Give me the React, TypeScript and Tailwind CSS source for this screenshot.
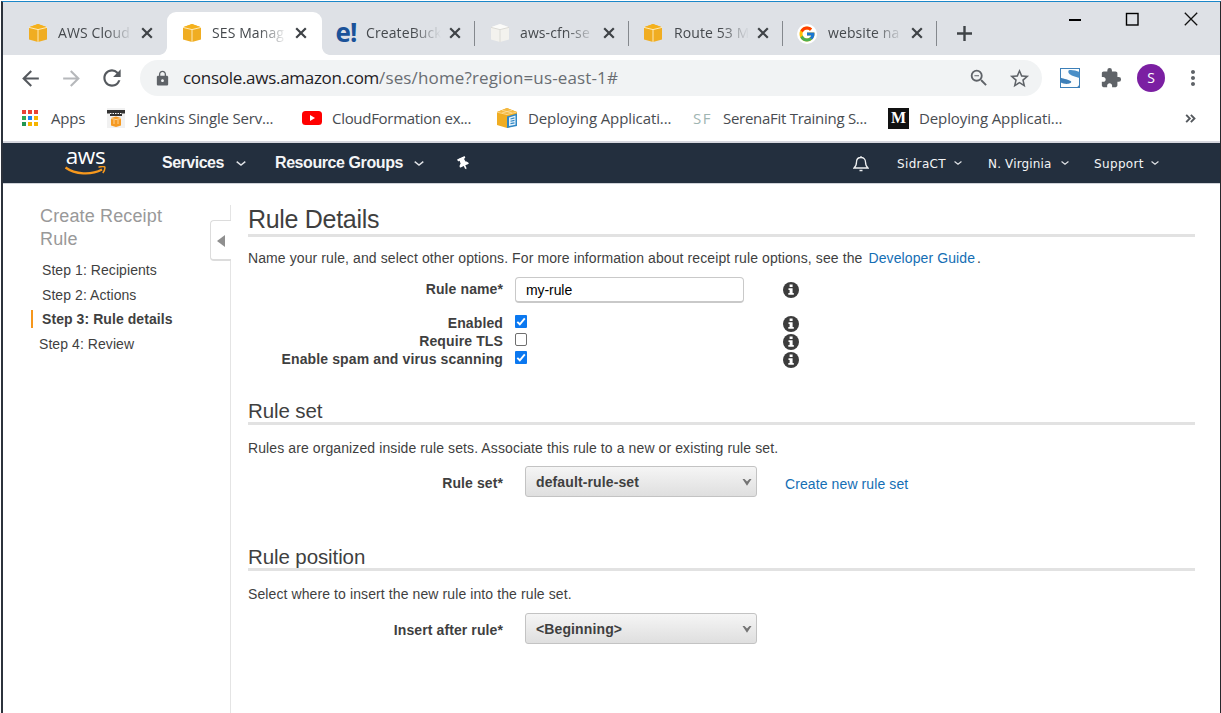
import type { ReactNode } from "react";
import { FcGoogle } from "react-icons/fc";
import {
  MdArrowBack,
  MdArrowForward,
  MdRefresh,
  MdLock,
  MdStarBorder,
  MdExtension,
  MdMoreVert,
  MdZoomOut,
} from "react-icons/md";
import { FaThumbtack } from "react-icons/fa";

function Cube({ face = "#f0ad22", top = "#f5b11c", line = "#fff1c9", className = "" }) {
  return (
    <svg viewBox="0 0 20 20" className={`size-5 shrink-0 ${className}`}>
      <path d="M1 4.2 10 1l9 3.2v12.4L10 19 1 16.6z" fill={face} />
      <path d="M1 4.2 10 1l9 3.2-9 2.2z" fill={top} />
      <path d="M1 4.4 10 6.6l9-2.2M10 6.6V19" fill="none" stroke={line} strokeWidth="0.9" />
    </svg>
  );
}

function CloseX() {
  return (
    <svg viewBox="0 0 12 12" className="size-3 shrink-0">
      <path d="M1.2 1.2 10.8 10.8M10.8 1.2 1.2 10.8" stroke="#3f4347" strokeWidth="2.2" fill="none" />
    </svg>
  );
}

function Tab({ icon, title, active = false, divider = false }: { icon: ReactNode; title: string; active?: boolean; divider?: boolean }) {
  return (
    <div className={`relative flex h-[43px] items-center pl-[14px] ${active ? "-mr-px w-[155px] rounded-t-[9px] bg-white" : "w-[154px]"}`}>
      <span className="flex w-[22px] justify-center">{icon}</span>
      <span className="-mt-px ml-[9px] w-[75px] overflow-hidden whitespace-nowrap text-[14px] leading-5 tracking-[0.1px] text-[#45494d] [mask-image:linear-gradient(to_right,#000_62%,transparent_100%)]">
        {title}
      </span>
      <span className="-mt-px ml-[8px] flex">
        <CloseX />
      </span>
      {divider && <span className="absolute right-0 top-[9px] h-[25px] w-px bg-[#84888d]" />}
      {active && (
        <>
          <span className="absolute -left-2 bottom-0 size-2 bg-[radial-gradient(circle_at_0_0,#dee1e6_7.5px,#fff_8.2px)]" />
          <span className="absolute -right-2 bottom-0 size-2 bg-[radial-gradient(circle_at_100%_0,#dee1e6_7.5px,#fff_8.2px)]" />
        </>
      )}
    </div>
  );
}

function TabStrip() {
  return (
    <div className="flex h-[53px] shrink-0 items-end bg-[#dee1e6] pl-[10px]">
      <Tab icon={<Cube className="-mt-px" />} title="AWS Cloud" />
      <Tab icon={<Cube className="-mt-px" />} title="SES Manag" active />
      <Tab
        icon={<span className="-mt-[3px] text-[26px] font-bold leading-5 tracking-[-1px] text-[#1b5299]">e!</span>}
        title="CreateBuck"
        divider
      />
      <Tab icon={<Cube face="#f3f2ee" top="#fbfbf9" line="#d9d8d2" className="-mt-px" />} title="aws-cfn-se" divider />
      <Tab icon={<Cube className="-ml-[2px] -mt-px" />} title="Route 53 M" divider />
      <Tab
        icon={
          <span className="-ml-[2px] flex size-5 shrink-0 items-center justify-center rounded-full bg-white">
            <FcGoogle size={18} />
          </span>
        }
        title="website na"
        divider
      />
      <div className="flex h-[43px] items-center pl-[20px]">
        <svg viewBox="0 0 15 15" className="size-[15px]">
          <path d="M7.5 0v15M0 7.5h15" stroke="#3f4347" strokeWidth="2.4" />
        </svg>
      </div>
      <div className="ml-auto mr-[22px] flex items-center gap-[44px] self-start pt-[10px]">
        <svg viewBox="0 0 14 14" className="size-[14px]">
          <path d="M1 8h12" stroke="#000" strokeWidth="2" />
        </svg>
        <svg viewBox="0 0 14 14" className="-ml-px mr-px size-[14px]">
          <rect x="1.5" y="1.5" width="11.5" height="11.5" fill="none" stroke="#000" strokeWidth="1.4" />
        </svg>
        <svg viewBox="0 0 14 14" className="size-[14px]">
          <path d="M.8.8 13.2 13.2M13.2.8.8 13.2" stroke="#111" strokeWidth="1.3" />
        </svg>
      </div>
    </div>
  );
}

function Toolbar() {
  return (
    <div className="flex h-[46px] shrink-0 items-center bg-white pl-[15px] text-[#5f6368]">
      <MdArrowBack size={25} className="text-[#55595e]" />
      <MdArrowForward size={25} className="ml-[16px] text-[#b6b8bb]" />
      <MdRefresh size={26} className="ml-[15px] text-[#55595e]" />
      <div className="ml-[15px] flex h-9 w-[902px] items-center rounded-full bg-[#f1f3f4] pl-[14px] pr-[11px]">
        <MdLock size={17} />
        <span className="ml-[12px] whitespace-nowrap text-[17px] leading-6 tracking-[-0.29px] text-[#1f2124]">console.aws.amazon.com</span>
        <span className="whitespace-nowrap text-[17px] leading-6 tracking-[0.14px] text-[#696d72]">/ses/home?region=us-east-1#</span>
        <MdZoomOut size={22} className="ml-auto" />
        <MdStarBorder size={23} className="ml-[18px]" />
      </div>
      <svg viewBox="0 0 20 20" className="ml-[18px] size-5">
        <rect x="0.5" y="0.5" width="19" height="19" fill="#fbfdfe" stroke="#3c7fb8" />
        <path d="M8.8 2.2C11.5 1.6 16 2.4 19.5 4v6C15 8.6 10.5 7.2 9 5.4 8.200 4.400 8 3 8.800 2.200z" fill="#4a8fc7" />
        <path d="M.8 9.8C4 11 9 11.6 11 13.3c.8 1-.4 2.200-2.500 2.500C5.500 16.200 2.500 15.400.8 14.600z" fill="#3c7fb8" />
        <path d="M16.5 19.5c1.600-.8 2.500-2 3-3.500v3.500z" fill="#3c7fb8" />
      </svg>
      <MdExtension size={22} className="ml-[20px]" />
      <span className="ml-[15px] flex size-7 items-center justify-center rounded-full bg-[#7b1fa2] text-[14px] text-white">
        <span className="-mt-[2px]">S</span>
      </span>
      <MdMoreVert size={24} className="ml-[16px]" />
    </div>
  );
}

function Bookmark({ icon, label, className = "" }: { icon: ReactNode; label: string; className?: string }) {
  return (
    <div className="flex items-center">
      {icon}
      <span className={`-mt-[2px] whitespace-nowrap text-[15px] leading-5 text-[#484c51] ${className}`}>{label}</span>
    </div>
  );
}

const dots = ["#ea4335", "#ea4335", "#ea4335", "#34a853", "#1a84f0", "#f6b400", "#219653", "#f6b400", "#f6b400"];

function Bookmarks() {
  return (
    <div className="flex h-[42px] shrink-0 items-center border-b-2 border-[#d6d7de] bg-white pb-[5px] pl-[19px]">
      <Bookmark
        icon={
          <svg viewBox="0 0 16 16" className="-mt-[2px] size-4">
            {dots.map((c, i) => (
              <rect key={i} x={(i % 3) * 6} y={Math.floor(i / 3) * 6} width="4" height="4" fill={c} />
            ))}
          </svg>
        }
        label="Apps"
        className="ml-[13px] w-[55px] tracking-[-0.2px]"
      />
      <Bookmark
        icon={
          <svg viewBox="0 0 20 20" className="-mt-[2px] size-5">
            <rect x="1" y="0" width="18" height="20" fill="#f1f1f1" />
            <path d="M1 2h18v3.5H16v2.5H4V5.5H1z" fill="#333" />
            <path d="M4 5.5h12" stroke="#fff" strokeWidth="1" strokeDasharray="1.5 1" />
            <path d="M5 10l5-1.5 5 1.5v7.5L10 19l-5-1.5z" fill="#f59a23" />
            <path d="M5 10.5l5 1 5-1M8 12v4M12 12v4" fill="none" stroke="#ffd9a0" strokeWidth="0.9" />
          </svg>
        }
        label="Jenkins Single Serv..."
        className="ml-[10px] w-[166px] tracking-[-0.17px]"
      />
      <Bookmark
        icon={
          <svg viewBox="0 0 20 14" className="-mt-px h-[14px] w-5">
            <rect width="20" height="14" rx="3.5" fill="#f00" />
            <path d="M8 4v6l5-3z" fill="#fff" />
          </svg>
        }
        label="CloudFormation ex..."
        className="ml-[10px] w-[165px] tracking-[-0.3px]"
      />
      <Bookmark
        icon={
          <svg viewBox="0 0 20 20" className="-mt-px size-5">
            <path d="M0 4 10 0l10 4v13L10 20 0 17z" fill="#f0ad22" />
            <path d="M0 4 10 0l10 4-10 2.5z" fill="#f4b942" />
            <path d="M0 4.2 10 6.6l9.5-2.4M5 2.2l10 2.8M15 2.2 5 5" fill="none" stroke="#ffe4a8" strokeWidth="0.7" />
            <path d="M10 8.5 20 5.5V18L10 20z" fill="#2f86c4" />
            <path d="M12 9.5 18.5 7.5v9.2L12 18z" fill="#e8f3fb" />
            <path d="M13.5 11l4-1.1M13.5 13.3l4-.9M13.5 15.6l4-.7" stroke="#2f86c4" strokeWidth="1.1" />
          </svg>
        }
        label="Deploying Applicati..."
        className="ml-[11px] w-[165px] tracking-[-0.11px]"
      />
      <Bookmark
        icon={<span className="-mt-[2px] w-[20px] text-[15px] leading-5 tracking-[1.5px] text-[#9fb5b2]">SF</span>}
        label="SerenaFit Training S..."
        className="ml-[10px] w-[165px] tracking-[-0.28px]"
      />
      <Bookmark
        icon={
          <span className="-mt-px flex size-[21px] items-center justify-center bg-[#111] font-['Liberation_Serif',serif] text-[16px] font-bold leading-none text-white">
            M
          </span>
        }
        label="Deploying Applicati..."
        className="ml-[10px] tracking-[-0.11px]"
      />
      <svg viewBox="0 0 12 10" className="-mt-px ml-auto mr-[24px] h-[9px] w-[11px]">
        <path d="M1.2 1l4 4-4 4M6.4 1l4 4-4 4" fill="none" stroke="#55595e" strokeWidth="2.1" />
      </svg>
    </div>
  );
}

function Caret({ small = false }: { small?: boolean }) {
  return (
    <svg viewBox="0 0 10 5" className={small ? "-mt-px h-1 w-2" : "mt-px h-[5px] w-[10px]"}>
      <path d="M.7.7 5 4 9.3.7" fill="none" stroke="#dfe2e6" strokeWidth="1.5" />
    </svg>
  );
}

function AwsNav() {
  return (
    <div className="flex h-10 shrink-0 items-center bg-[#232f3e] pl-[61px] text-[#f4f5f6]">
      <div className="flex w-[43px] flex-col items-center">
        <span className="-mt-[3px] font-['Open_Sans',sans-serif] text-[22.5px] leading-[18px] tracking-[-0.4px] text-white">aws</span>
        <svg viewBox="0 0 43 10" className="mt-px h-[10px] w-[43px]">
          <path d="M1.5 1.5C11 8.5 27 9.5 38 3.5" fill="none" stroke="#f7981d" strokeWidth="2.3" />
          <path d="M34.5 1.2c3-.9 5.3-.9 6.3-.2.4 1.8-.4 4-2 6" fill="none" stroke="#f7981d" strokeWidth="1.5" />
        </svg>
      </div>
      <div className="ml-[55px] flex items-center font-['Liberation_Sans',Arial,sans-serif] text-[16px] font-bold leading-5">
        <span className="w-[74px] whitespace-nowrap tracking-[-0.5px]">Services</span>
        <Caret />
        <span className="ml-[29px] w-[139px] whitespace-nowrap tracking-[-0.42px]">Resource Groups</span>
        <Caret />
      </div>
      <FaThumbtack size={13} className="ml-[33px] -rotate-[25deg] text-white" />
      <svg viewBox="0 0 16 17" className="ml-auto h-[17px] w-4">
        <path d="M8 1v1.5M1 13h14c-2-1.6-2.5-2.5-2.5-6C12.5 4 10.5 2.5 8 2.5S3.5 4 3.5 7c0 3.5-.5 4.4-2.5 6zM6.5 15.5h3" fill="none" stroke="#eceef0" strokeWidth="1.3" />
      </svg>
      <div className="ml-[28px] mr-[61px] flex items-center whitespace-nowrap pt-px font-['DejaVu_Sans',sans-serif] text-[12px] leading-5">
        <span className="w-[57px] tracking-[0.35px]">SidraCT</span>
        <Caret small />
        <span className="ml-[26px] w-[73px] tracking-[0.15px]">N. Virginia</span>
        <Caret small />
        <span className="ml-[25px] w-[57px] tracking-[0.35px]">Support</span>
        <Caret small />
      </div>
    </div>
  );
}

function Sidebar() {
  return (
    <aside className="mt-[21px] flex w-[228px] shrink-0 justify-between border-r border-[#e4e4e4]">
      <div className="w-[180px] pl-[28px]">
        <h2 className="w-[150px] pl-[9px] text-[18px] leading-[23px] tracking-[0.14px] text-[#999]">Create Receipt Rule</h2>
        <ul className="mt-[10px] flex flex-col gap-[7px] whitespace-nowrap text-[14px] leading-[18px] tracking-[0.07px]">
          <li className="pl-[11px]">Step 1: Recipients</li>
          <li className="pl-[11px]">Step 2: Actions</li>
          <li className="-mt-px border-l-2 border-[#f6971c] pl-[9px] font-bold">Step 3: Rule details</li>
          <li className="pl-[8px]">Step 4: Review</li>
        </ul>
      </div>
      <div className="-mr-px mt-[15px] flex h-[41px] w-[21px] items-center rounded-l-[4px] border border-b-2 border-r-0 border-[#dcdcdc] bg-white pl-[6px] pt-[2px]">
        <svg viewBox="0 0 8 12" className="h-3 w-2">
          <path d="M8 0v12L0 6z" fill="#8f8f8f" />
        </svg>
      </div>
    </aside>
  );
}

function Info() {
  return (
    <svg viewBox="0 0 16 16" className="size-4">
      <circle cx="8" cy="8" r="8" fill="#3c3c3c" />
      <path d="M6.6 2.6h3v2.4h-3zM5.5 6.2h4.1v4.9h1.2v1.7H5.3v-1.7h1.3V7.9H5.5z" fill="#fff" />
    </svg>
  );
}

function Check({ on }: { on: boolean }) {
  return on ? (
    <svg viewBox="0 0 12 13" className="h-[13px] w-3">
      <rect width="12" height="13" rx="1" fill="#0b78f0" />
      <path d="M2.3 6.9 4.8 9.3 9.8 3.4" fill="none" stroke="#fff" strokeWidth="1.9" />
    </svg>
  ) : (
    <span className="h-[13px] w-3 rounded-[2px] border border-[#6f6f6f] bg-white" />
  );
}

function Option({ label, on }: { label: string; on: boolean }) {
  return (
    <div className="flex h-[18px] items-start">
      <span className="w-[255px] whitespace-nowrap text-right font-bold leading-4 tracking-[0.12px]">{label}</span>
      <span className="ml-[12px] flex w-[268px]">
        <Check on={on} />
      </span>
      <span className="pt-[1px]">
        <Info />
      </span>
    </div>
  );
}

function Heading({ children, big = false }: { children: ReactNode; big?: boolean }) {
  return (
    <h3
      className={`border-b-[3px] border-[#e2e2e2] ${big ? "h-[32px] text-[25px] leading-[28px] tracking-[-0.3px]" : "h-[26px] text-[20.5px] leading-[23px] tracking-[-0.1px]"}`}
    >
      {children}
    </h3>
  );
}

function Select({ label, value }: { label: string; value: string }) {
  return (
    <>
      <span className="w-[255px] pt-[2px] text-right font-bold leading-4 tracking-[0.1px]">{label}</span>
      <div className="ml-[22px] flex h-[31px] w-[232px] items-center justify-between rounded-[3px] border border-[#c3c3c3] bg-linear-to-b from-[#f5f5f5] to-[#dfdfdf] pl-[10px] pr-[4px] font-bold leading-4 tracking-[0.12px]">
        {value}
        <svg viewBox="0 0 10 8" className="h-2 w-[10px]">
          <path d="M.5 1h2L5 3.5 7.5 1h2L5 7.8z" fill="#747474" />
        </svg>
      </div>
    </>
  );
}

function Content() {
  return (
    <main className="ml-[17px] mt-[21px] flex w-[947px] flex-col text-[14px] leading-4 tracking-[0.1px]">
      <Heading big>Rule Details</Heading>
      <p className="mt-[13px] whitespace-nowrap">
        Name your rule, and select other options. For more information about receipt rule options, see the
        <a className="ml-[6px] text-[#146eb4]">Developer Guide</a>
        <span className="ml-[2px]">.</span>
      </p>
      <div className="mt-[11px] flex h-[26px] items-center">
        <span className="-mt-[2px] w-[255px] text-right font-bold">Rule name*</span>
        <div className="ml-[12px] flex h-[26px] w-[229px] items-center rounded-[4px] border border-b-2 border-[#c9c9c9] bg-white pl-[10px] tracking-[-0.08px] text-black">
          my-rule
        </div>
        <span className="ml-[39px]">
          <Info />
        </span>
      </div>
      <div className="mt-[12px] flex flex-col">
        <Option label="Enabled" on />
        <Option label="Require TLS" on={false} />
        <Option label="Enable spam and virus scanning" on />
      </div>
      <div className="mt-[30px]">
        <Heading>Rule set</Heading>
      </div>
      <p className="mt-[15px] whitespace-nowrap">Rules are organized inside rule sets. Associate this rule to a new or existing rule set.</p>
      <div className="mt-[10px] flex items-center">
        <Select label="Rule set*" value="default-rule-set" />
        <a className="ml-[28px] pt-[5px] text-[#146eb4]">Create new rule set</a>
      </div>
      <div className="mt-[48px]">
        <Heading>Rule position</Heading>
      </div>
      <p className="mt-[15px] whitespace-nowrap">Select where to insert the new rule into the rule set.</p>
      <div className="mt-[11px] flex items-center">
        <Select label="Insert after rule*" value="<Beginning>" />
      </div>
    </main>
  );
}

export default function App() {
  return (
    <div className="h-[713px] w-[1221px] overflow-hidden bg-white pl-px pt-px">
      <div className="flex h-full flex-col border-l-2 border-r border-t border-l-[#2c323c] border-r-[#26282c] border-t-[#1b87c9] font-['Open_Sans',sans-serif]">
        <TabStrip />
        <Toolbar />
        <Bookmarks />
        <AwsNav />
        <div className="flex min-h-0 grow border-t border-[#cfd2d8] bg-white font-['Liberation_Sans',Arial,sans-serif] text-[#3f3f3f]">
          <Sidebar />
          <Content />
        </div>
      </div>
    </div>
  );
}
